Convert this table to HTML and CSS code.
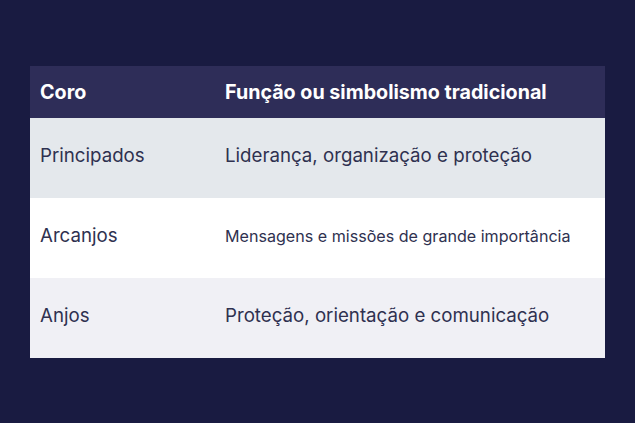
FILE: index.html
```html
<!DOCTYPE html>
<html lang="pt">
<head>
<meta charset="utf-8">
<link rel="stylesheet" href="styles.css">
</head>
<body>
<div class="page">
  <table class="choirs">
    <thead>
      <tr><th class="c1">Coro</th><th>Função ou simbolismo tradicional</th></tr>
    </thead>
    <tbody>
      <tr class="r1"><td class="c1">Principados</td><td>Liderança, organização e proteção</td></tr>
      <tr class="r2"><td class="c1">Arcanjos</td><td class="small">Mensagens e missões de grande importância</td></tr>
      <tr class="r3"><td class="c1">Anjos</td><td>Proteção, orientação e comunicação</td></tr>
    </tbody>
  </table>
</div>
</body>
</html>
```
FILE: styles.css
```css
html, body {
  margin: 0;
  padding: 0;
  background: #191b41;
}
.page {
  width: 635px;
  height: 423px;
  padding: 66px 30px 0 30px;
  box-sizing: border-box;
}
.choirs {
  width: 575px;
  border-collapse: collapse;
  font-family: Inter, "Noto Sans", sans-serif;
}
.choirs th {
  background: #2e2d58;
  color: #ffffff;
  font-weight: 700;
  font-size: 19.7px;
  text-align: left;
  height: 52px;
  padding: 0 10px;
  box-sizing: border-box;
}
.choirs td {
  height: 80px;
  padding: 0 10px 5px 10px;
  box-sizing: border-box;
  font-size: 18.7px;
  color: #2f3150;
  vertical-align: middle;
}
.choirs .c1 {
  width: 185px;
}
.choirs td.small {
  font-size: 16.1px;
}
.r1 { background: #e4e8ec; }
.r2 { background: #ffffff; }
.r3 { background: #f0f0f5; }
```
